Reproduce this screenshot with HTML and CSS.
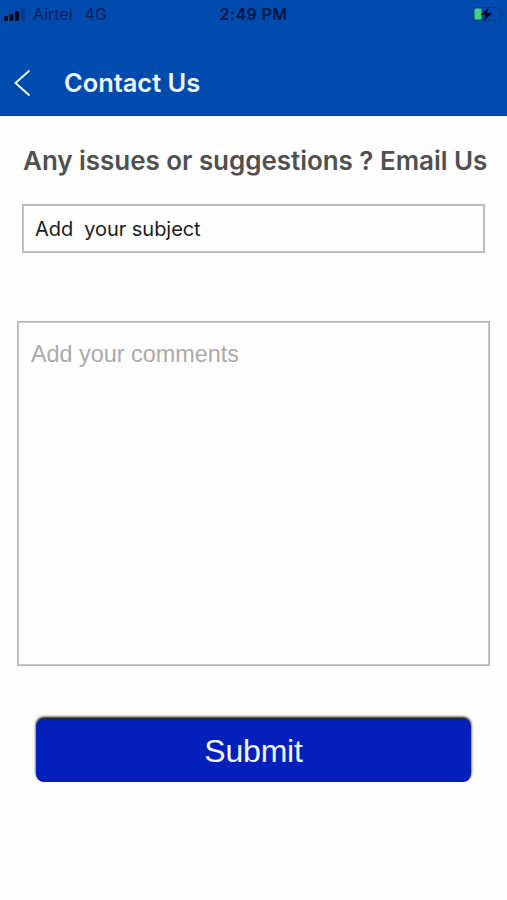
FILE: index.html
```html
<!DOCTYPE html>
<html lang="en">
<head>
<meta charset="UTF-8">
<meta name="viewport" content="width=device-width, initial-scale=1.0">
<title>Contact Us</title>
<link rel="stylesheet" href="styles.css">
</head>
<body>
<div class="header">
    <div class="status-bar">
        <div class="carrier">
            <svg class="signal" width="22" height="13" viewBox="0 0 22 13">
                <rect x="0" y="8" width="4" height="5" rx="1"/>
                <rect x="5.5" y="6" width="4" height="7" rx="1"/>
                <rect x="11" y="3" width="4" height="10" rx="1"/>
                <rect x="17" y="0" width="4" height="13" rx="1" opacity="0.25"/>
            </svg>
            <span class="carrier-name">Airtel</span>
            <span class="network">4G</span>
        </div>
        <div class="time">2:49 PM</div>
        <svg class="battery" width="34" height="18" viewBox="0 0 34 18">
            <rect x="1.5" y="2.5" width="27" height="13" rx="3" fill="none" stroke="#023e90" stroke-width="1"/>
            <path d="M30.5 7 Q32.5 9 30.5 11 Z" fill="#023e90"/>
            <rect x="2.5" y="3.5" width="7" height="11" rx="1.5" fill="#42d37b"/>
            <path d="M17 2 L8.5 10 H13.5 L11.5 16 L20.5 8 H15.2 Z" fill="#020b24"/>
        </svg>
    </div>
    <div class="nav">
        <svg class="back" width="18" height="30" viewBox="0 0 18 30">
            <path d="M16.5 2.5 L2.5 15 L16.5 27.5" fill="none" stroke="#e8f3ff" stroke-width="2"/>
        </svg>
        <div class="title">Contact Us</div>
    </div>
</div>

<form class="contact">
    <div class="heading">Any issues or suggestions ? Email Us</div>
    <input class="subject" type="text" value="Add  your subject">
    <textarea class="comments" placeholder="Add your comments"></textarea>
    <button class="submit" type="button">Submit</button>
</form>
</body>
</html>
```

FILE: styles.css
```css
* {
    box-sizing: border-box;
}

body {
    font-family: Inter, "Liberation Sans", sans-serif;
    margin: 0;
    background: #fefefe;
}

.header {
    height: 116px;
    background: #004bad;
    border-bottom: 1px solid #013b94;
}

.status-bar {
    display: grid;
    grid-template-columns: 1fr auto 1fr;
    align-items: center;
    height: 28px;
    padding: 0 1px 0 4px;
    color: #04205c;
    font-size: 16px;
}

.carrier {
    display: flex;
    align-items: center;
}

.signal {
    fill: #020b24;
}

.carrier-name {
    margin-left: 7px;
}

.network {
    margin-left: 12px;
}

.time {
    margin-right: 3px;
    color: #031748;
    font-weight: 600;
    letter-spacing: 0.4px;
}

.battery {
    justify-self: end;
}

.nav {
    display: flex;
    align-items: center;
    height: 30px;
    margin-top: 40px;
    padding-left: 13px;
}

.title {
    margin-left: 33px;
    color: #eef6ff;
    font-size: 25.4px;
    font-weight: 600;
    line-height: 30px;
}

.contact {
    display: flex;
    flex-direction: column;
    padding: 28px 17px 0;
}

.heading {
    height: 32px;
    margin-left: 6px;
    line-height: 33px;
    color: #505050;
    font-size: 26px;
    font-weight: 600;
    letter-spacing: -0.04px;
    white-space: nowrap;
}

.subject {
    height: 49px;
    margin: 28px 5px 0;
    padding: 0 12px;
    border: 1px solid #b8b8b8;
    box-shadow: inset 0 0 0 1px #c4c4c4;
    background: #fefefe;
    color: #1c1c1c;
    font-family: inherit;
    font-size: 20px;
    letter-spacing: -0.05px;
    outline: none;
}

.comments {
    height: 345px;
    margin-top: 68px;
    padding: 19px 13px;
    border: 1px solid #b4b4b4;
    box-shadow: inset 0 0 0 1px #c8c8c8;
    background: #fefefe;
    font-family: "Liberation Sans", sans-serif;
    font-size: 23.4px;
    resize: none;
    outline: none;
}

.comments::placeholder {
    color: #aaa;
}

.submit {
    height: 63px;
    margin: 53px 19px 0;
    padding: 2px 0 0;
    border: none;
    border-radius: 8px;
    background: #0320bb;
    box-shadow: 0 -2px 3px #000;
    color: #f2f4ff;
    font-family: "Liberation Sans", sans-serif;
    font-size: 32px;
    letter-spacing: -0.2px;
}
```
